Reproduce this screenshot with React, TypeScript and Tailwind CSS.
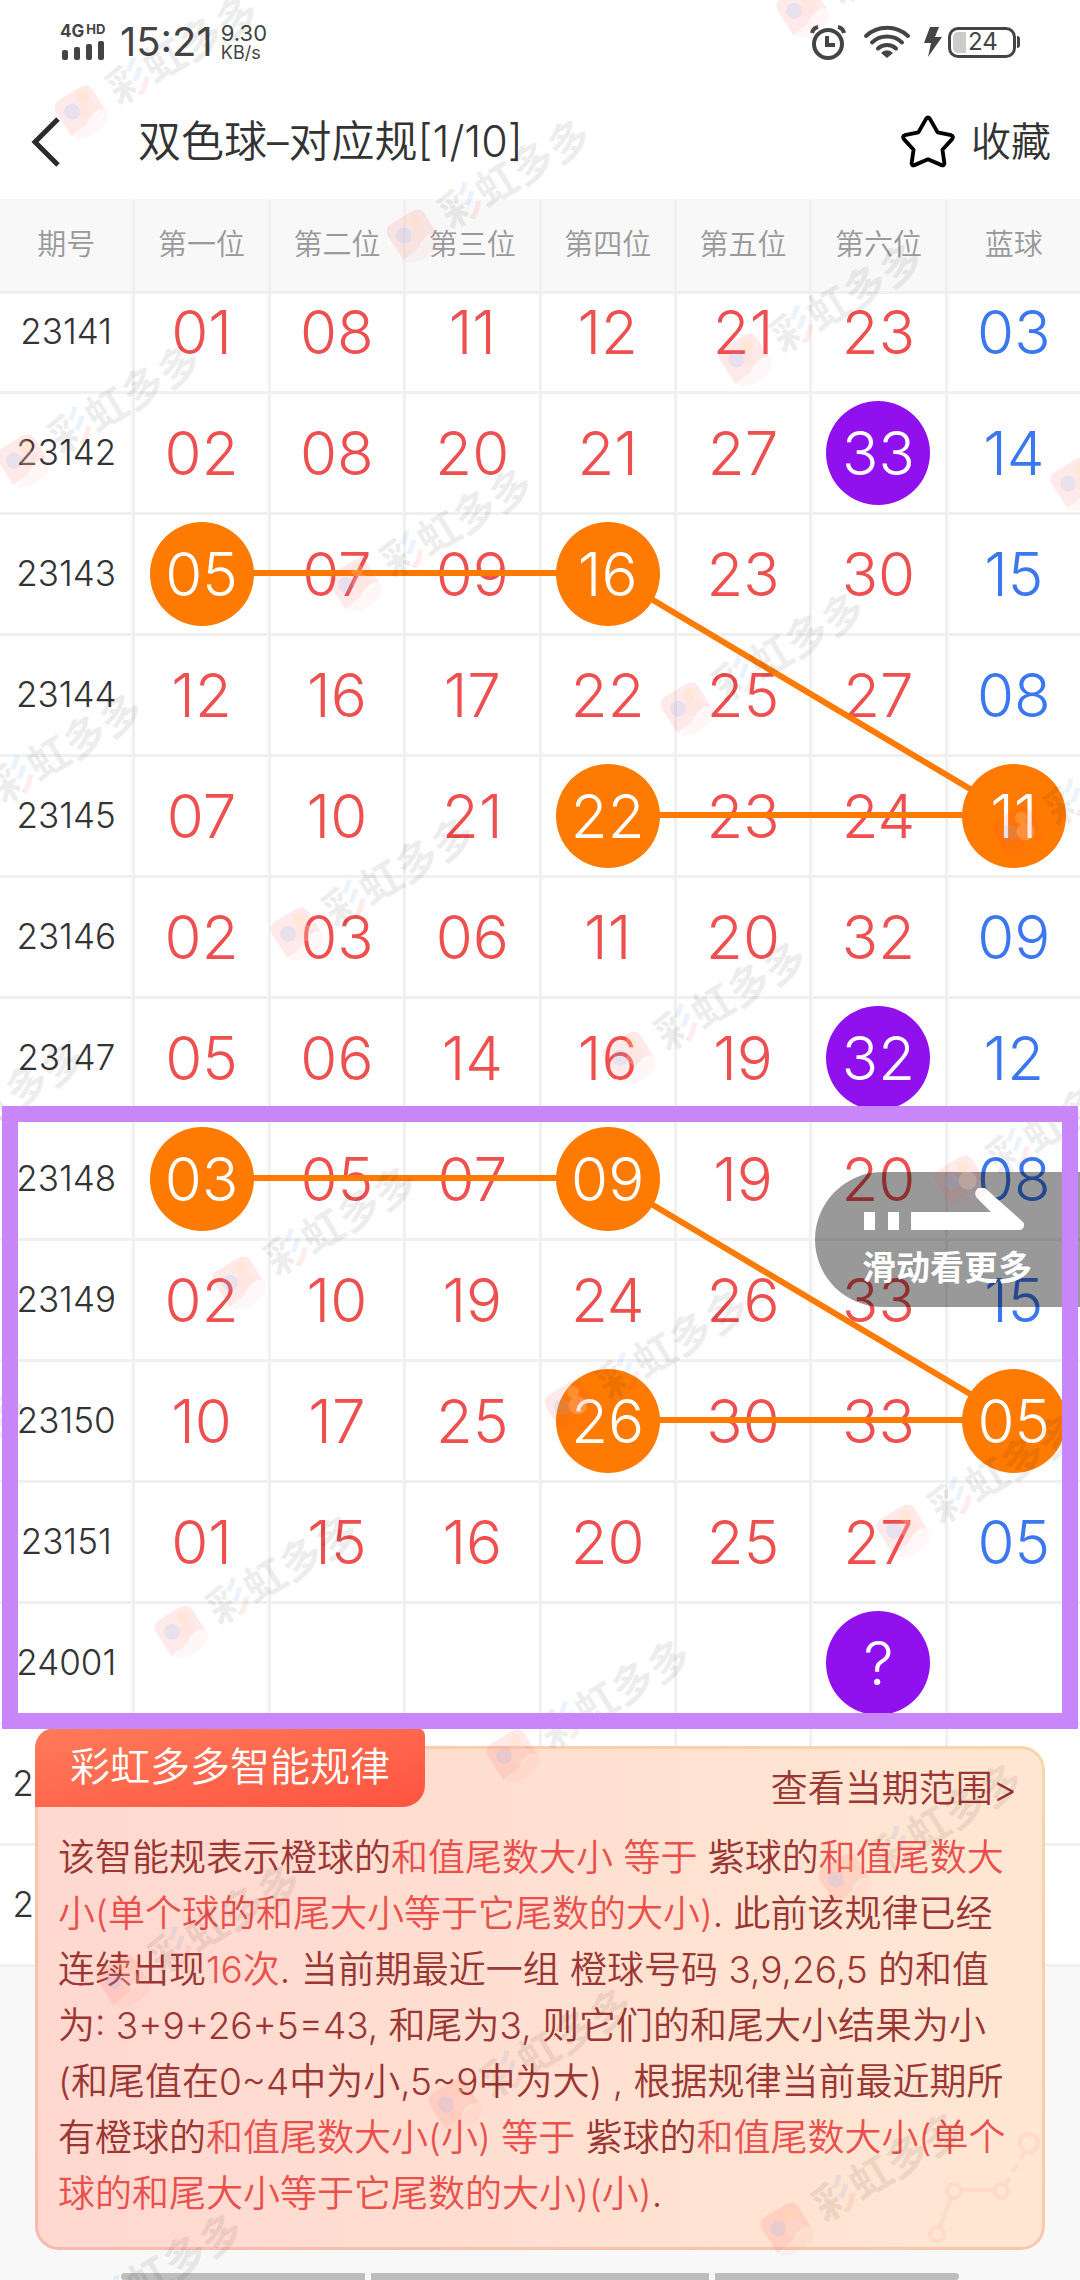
import { ReactNode } from "react";

type Mark = "orange" | "purple";

interface Draw {
  issue: string;
  numbers: string[];
  marks?: Record<number, Mark>;
}

const columns = ["期号", "第一位", "第二位", "第三位", "第四位", "第五位", "第六位", "蓝球"];

const draws: Draw[] = [
  { issue: "23141", numbers: ["01", "08", "11", "12", "21", "23", "03"] },
  { issue: "23142", numbers: ["02", "08", "20", "21", "27", "33", "14"], marks: { 5: "purple" } },
  { issue: "23143", numbers: ["05", "07", "09", "16", "23", "30", "15"], marks: { 0: "orange", 3: "orange" } },
  { issue: "23144", numbers: ["12", "16", "17", "22", "25", "27", "08"] },
  { issue: "23145", numbers: ["07", "10", "21", "22", "23", "24", "11"], marks: { 3: "orange", 6: "orange" } },
  { issue: "23146", numbers: ["02", "03", "06", "11", "20", "32", "09"] },
  { issue: "23147", numbers: ["05", "06", "14", "16", "19", "32", "12"], marks: { 5: "purple" } },
  { issue: "23148", numbers: ["03", "05", "07", "09", "19", "20", "08"], marks: { 0: "orange", 3: "orange" } },
  { issue: "23149", numbers: ["02", "10", "19", "24", "26", "33", "15"] },
  { issue: "23150", numbers: ["10", "17", "25", "26", "30", "33", "05"], marks: { 3: "orange", 6: "orange" } },
  { issue: "23151", numbers: ["01", "15", "16", "20", "25", "27", "05"] },
  { issue: "24001", numbers: ["", "", "", "", "", "?", ""], marks: { 5: "purple" } },
  { issue: "24002", numbers: ["", "", "", "", "", "", ""] },
  { issue: "24003", numbers: ["", "", "", "", "", "", ""] },
];

const ROW = 121;
const rowY = (row: number) => row * ROW + 58;
const colX = (col: number) => col * 135.4 + 66;

// each path joins the orange balls of one group: [row, column]
const paths = [
  [[2, 1], [2, 4], [4, 7], [4, 4]],
  [[7, 1], [7, 4], [9, 7], [9, 4]],
];

const StatusBar = () => (
  <div className="flex h-[84px] items-center justify-between pl-[60px] pr-[60px] text-[#444]">
    <div className="flex items-center">
      <div className="flex w-[48px] flex-col gap-[2px]">
        <div className="flex items-start gap-[2px] font-bold leading-none">
          <span className="text-[17px] leading-[14px]">4G</span>
          <span className="text-[13px] leading-[10px]">HD</span>
        </div>
        <svg viewBox="0 0 48 20" className="h-[20px] w-[48px]" fill="#444">
          <rect x="2" y="10" width="6" height="10" rx="2" />
          <rect x="14" y="7" width="6" height="13" rx="2" />
          <rect x="26" y="4" width="6" height="16" rx="2" />
          <rect x="38" y="1" width="6" height="19" rx="2" />
        </svg>
      </div>
      <span className="ml-3 text-[40px] font-normal leading-none">15:21</span>
      <div className="ml-2 mt-[2px] flex flex-col font-normal">
        <span className="text-[22px] leading-[20px]">9.30</span>
        <span className="text-[18px] leading-[20px]">KB/s</span>
      </div>
    </div>
    <div className="flex items-center">
      <svg viewBox="0 0 36 36" className="mr-[17px] size-[36px]" fill="none" stroke="#444">
        <circle cx="18" cy="20" r="14" strokeWidth="4" />
        <path d="M17 12v9h8" strokeWidth="4" />
        <path d="M2 9a8 8 0 0 1 6-6M34 9a8 8 0 0 0-6-6" strokeWidth="4" />
      </svg>
      <svg viewBox="0 0 48 36" className="mr-[13px] h-[36px] w-[48px]" fill="none" stroke="#444" strokeWidth="4" strokeLinecap="round">
        <path d="M3 12a31 31 0 0 1 42 0" />
        <path d="M9 18.5a22 22 0 0 1 30 0" />
        <path d="M15 24.5a13 13 0 0 1 18 0" />
        <path d="M24 34l-6-5a8 8 0 0 1 12 0z" fill="#444" stroke="none" />
      </svg>
      <svg viewBox="0 0 18 30" className="mr-[6px] h-[30px] w-[18px]" fill="#444">
        <path d="M6 0h9l-4 10h7L4 30l3-14H0z" />
      </svg>
      <div className="flex h-[31px] w-[68px] items-center gap-[2px] rounded-[10px] border-[3px] border-[#444] pl-[2px]">
        <span className="h-[21px] w-[13px] rounded-l-[5px] bg-[#ccc]"></span>
        <span className="text-[24px] font-normal leading-none">24</span>
      </div>
      <span className="ml-px h-[12px] w-[3px] rounded-r-full bg-[#444]"></span>
    </div>
  </div>
);

const TitleBar = () => (
  <header className="flex h-[115px] items-center pl-[30px] pr-[29px] text-[#333]">
    <button type="button" aria-label="返回" className="mr-[78px]">
      <svg viewBox="0 0 30 52" className="h-[52px] w-[30px]" fill="none" stroke="#2b2b2b" strokeWidth="5">
        <path d="M28 3L5 26l23 23" />
      </svg>
    </button>
    <h1 className="grow text-[43px] leading-none">双色球–对应规[1/10]</h1>
    <button type="button" className="flex items-center gap-4 text-[40px] leading-none">
      <svg viewBox="0 0 56 55" className="h-[53px] w-[54px]" fill="none" stroke="#000" strokeWidth="4" strokeLinejoin="round">
        <path d="M26 4q2-3 4 0l8 14 14 3q3 1 1 4L43 36l2 14q0 3-3 2l-14-6-14 6q-3 1-3-2l2-14L3 25q-2-3 1-4l14-3z" />
      </svg>
      收藏
    </button>
  </header>
);

const Ball = ({ mark, children }: { mark: Mark; children: ReactNode }) => (
  <span
    className={`relative z-10 flex size-[104px] items-center justify-center rounded-full text-white ${
      mark === "orange" ? "bg-[#ff7a00]" : "bg-[#9010ee]"
    }`}
  >
    {children}
  </span>
);

const Trend = () => (
  <section className="relative">
    <table className="block w-full">
      <thead className="relative z-20 block">
        <tr className="grid grid-cols-8 gap-x-[3px] border-b-[3px] border-[#f0f0f0] bg-[#f0f0f0]">
          {columns.map((name) => (
            <th key={name} className="flex h-[92px] items-center justify-center bg-[#f8f8f8] text-[29px] font-[350] text-[#999]">
              {name}
            </th>
          ))}
        </tr>
      </thead>
      {/* the first draw is partly scrolled under the header */}
      <tbody className="relative -mt-[21px] block">
        {draws.map(({ issue, numbers, marks }) => (
          <tr key={issue} className="grid h-[121px] grid-cols-8 gap-x-[3px] border-b-[3px] border-[#f0f0f0] bg-[#f0f0f0]">
            <td className="flex items-center justify-center bg-white pb-[2px] text-[35px] text-[#333]">{issue}</td>
            {numbers.map((value, i) => (
              <td
                key={i}
                className={`flex items-center justify-center bg-white text-[60px] leading-none ${
                  i === 6 ? "text-[#3b78f0]" : "text-[#ee4f4f]"
                }`}
              >
                {marks?.[i] ? <Ball mark={marks[i]}>{value}</Ball> : value}
              </td>
            ))}
          </tr>
        ))}
        <tr className="pointer-events-none absolute inset-0 block">
          <td className="block h-full p-0">
            <svg viewBox={`0 0 1080 ${draws.length * ROW}`} preserveAspectRatio="none" className="block size-full" aria-hidden="true">
              {paths.map((points, i) => (
                <polyline
                  key={i}
                  points={points.map(([row, col]) => `${colX(col)},${rowY(row)}`).join(" ")}
                  fill="none"
                  stroke="#ff7a00"
                  strokeWidth="6"
                />
              ))}
            </svg>
          </td>
        </tr>
      </tbody>
    </table>

    <button
      type="button"
      className="absolute right-0 top-[973px] z-20 flex h-[135px] w-[265px] flex-col items-start rounded-l-full bg-black/40 pl-[47px] pt-[16px] text-white"
    >
      <svg viewBox="0 0 164 44" className="h-[44px] w-[164px]" fill="#fff" aria-hidden="true">
        <rect x="2" y="24" width="11" height="18" />
        <rect x="26" y="24" width="11" height="18" />
        <path d="M49 24h80L115 10a6 6 0 0 1 9-9l37 33a5 5 0 0 1-3 8H49z" />
      </svg>
      <span className="mt-[16px] text-[34px] font-bold leading-[40px]">滑动看更多</span>
    </button>

    <div className="pointer-events-none absolute inset-x-[2px] top-[907px] z-40 h-[623px] border-[16px] border-[#c986fa]"></div>
  </section>
);

const Hot = ({ children }: { children: ReactNode }) => <span className="text-[#ea504b]">{children}</span>;

const RuleCard = () => (
  <div className="relative mx-[35px] rounded-b-[24px] rounded-tr-[24px] bg-linear-to-tr from-[#f9b9ae] to-[#fad5a8] p-[3px]">
    <div className="relative rounded-b-[21px] rounded-tr-[21px] bg-linear-to-r from-[#ffd8d0] to-[#ffe7d3] px-[20px] pb-[25px] pt-[18px]">
      <svg viewBox="0 0 116 116" className="absolute bottom-0 right-0 size-[116px]" fill="none" stroke="#ffdac8" strokeWidth="4" aria-hidden="true">
        <circle cx="11" cy="103" r="7" />
        <circle cx="28" cy="60" r="7" />
        <circle cx="75" cy="60" r="7" />
        <circle cx="103" cy="12" r="9" />
        <path d="M14 96l11-29M35 59h33" />
        <path d="M79 54l20-34" strokeDasharray="9 6" />
      </svg>
      <div className="relative flex justify-end">
        <a href="#range" className="mr-[5px] text-[37px] leading-[44px]">
          查看当期范围&gt;
        </a>
      </div>
      <p className="relative mt-[19px] text-[37px] leading-[56px]">
        该智能规表示橙球的<Hot>和值尾数大小 等于</Hot> 紫球的<Hot>和值尾数大
        <br />
        小(单个球的和尾大小等于它尾数的大小)</Hot>. 此前该规律已经
        <br />
        连续出现<Hot>16次</Hot>. 当前期最近一组 橙球号码 3,9,26,5 的和值
        <br />
        为: 3+9+26+5=43, 和尾为3, 则它们的和尾大小结果为小
        <br />
        (和尾值在0~4中为小,5~9中为大) , 根据规律当前最近期所
        <br />
        有橙球的<Hot>和值尾数大小(小) 等于</Hot> 紫球的<Hot>和值尾数大小(单个
        <br />
        球的和尾大小等于它尾数的大小)(小)</Hot>.
      </p>
    </div>
    <h2 className="absolute left-0 -top-[18px] flex h-[79px] items-center rounded-tl-[20px] rounded-tr-[8px] rounded-br-[22px] bg-linear-to-br from-[#ff7b59] to-[#ff5240] px-[35px] pb-[2px] text-[40px] text-white">
      彩虹多多智能规律
    </h2>
  </div>
);

const Watermark = () => {
  const marks: { x: number; y: number }[] = [];
  for (let row = -1; row < 8; row++) {
    for (let col = -1; col < 6; col++) {
      const x = 81 + col * 332 - row * 58;
      const y = 111 + col * 124 + row * 349;
      if (x > -160 && x < 1100 && y > -20 && y < 2340) marks.push({ x, y });
    }
  }

  return (
    <svg className="pointer-events-none fixed inset-0 z-30 size-full" aria-hidden="true">
      <defs>
        <pattern id="ink-cai" patternUnits="userSpaceOnUse" x="35" y="-30" width="42" height="60">
          <rect width="25" height="60" fill="#000" fillOpacity="0.07" />
          <rect x="25" width="17" height="34" fill="#3b8cff" fillOpacity="0.1" />
          <rect x="25" y="34" width="17" height="26" fill="#ff3b3b" fillOpacity="0.09" />
        </pattern>
      </defs>
      {marks.map(({ x, y }) => (
        <g key={`${x},${y}`} transform={`translate(${x} ${y}) rotate(-31)`} className="text-[42px] font-bold">
          <path d="M-22-11q0-10 10-10h23q10 0 10 10v21q-13-5-21 3l-21 4z" fill="#ff4b4b" fillOpacity="0.12" />
          <circle cx="-8" cy="-4" r="8" fill="#7fb4ff" fillOpacity="0.17" />
          <circle cx="6" cy="3" r="9" fill="#ffe0d4" fillOpacity="0.25" />
          <circle cx="9" cy="-11" r="6" fill="#ffdf9e" fillOpacity="0.25" />
          <path d="M-20 20q8-7 20-7 12-1 22-5 1 14-12 17-18 4-30-5z" fill="#ff6b5b" fillOpacity="0.05" />
          <text x="35" y="15" fill="url(#ink-cai)">彩</text>
          <text x="77" y="15" fill="#000" fillOpacity="0.07">虹多多</text>
        </g>
      ))}
    </svg>
  );
};

const App = () => (
  <div className="min-h-screen bg-[#f8f8f8] font-['Inter','Noto_Sans_CJK_SC',sans-serif] font-[350]">
    <div className="bg-white">
      <StatusBar />
      <TitleBar />
      <Trend />
    </div>
    <div className="fixed inset-x-0 bottom-0 z-20 text-[#9b3632]">
      <RuleCard />
      <div className="mt-[23px] flex h-[7px] justify-center gap-[6px]">
        <span className="w-[244px] rounded-l-full bg-[#bdbdbd]"></span>
        <span className="w-[338px] bg-[#bdbdbd]"></span>
        <span className="w-[244px] rounded-r-full bg-[#bdbdbd]"></span>
      </div>
    </div>
    <Watermark />
  </div>
);

export default App;
